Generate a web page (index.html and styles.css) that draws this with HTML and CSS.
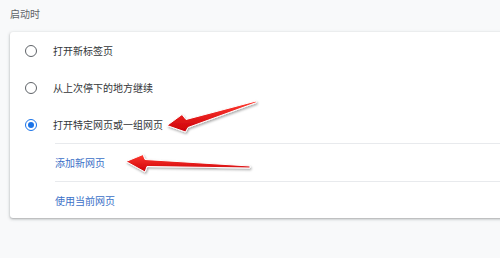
FILE: index.html
```html
<!DOCTYPE html>
<html lang="zh">
<head>
<meta charset="utf-8">
<link rel="stylesheet" href="styles.css">
</head>
<body>
<div class="page">
  <div class="title">启动时</div>
  <div class="card">
    <div class="row">
      <span class="radio"></span>
      <span class="label">打开新标签页</span>
    </div>
    <div class="row">
      <span class="radio"></span>
      <span class="label">从上次停下的地方继续</span>
    </div>
    <div class="row">
      <span class="radio checked"></span>
      <span class="label">打开特定网页或一组网页</span>
    </div>
    <div class="sub">
      <div class="link-row">添加新网页</div>
      <div class="link-row">使用当前网页</div>
    </div>
  </div>
  <svg class="arrows" width="500" height="258" viewBox="0 0 500 258">
    <defs>
      <linearGradient id="g1" x1="0" y1="0" x2="0" y2="1">
        <stop offset="0" stop-color="#ff3b30"/>
        <stop offset="1" stop-color="#cc0008"/>
      </linearGradient>
      <filter id="sh" x="-10%" y="-50%" width="120%" height="200%">
        <feDropShadow dx="1" dy="1.5" stdDeviation="1.3" flood-color="#000" flood-opacity="0.35"/>
      </filter>
    </defs>
    <polygon points="167,125.5 182,114.5 186,119.5 256,101 256.5,102.5 188,127.5 185.5,132" fill="url(#g1)" stroke="#fff" stroke-width="1" stroke-linejoin="round" filter="url(#sh)"/>
    <polygon points="126,161.5 143,154.5 145,159.5 250,166 250,168 147,166.5 145,172" fill="url(#g1)" stroke="#fff" stroke-width="1" stroke-linejoin="round" filter="url(#sh)"/>
  </svg>
</div>
</body>
</html>
```
FILE: styles.css
```css
html, body {
  margin: 0;
  padding: 0;
  background: #f8f9fa;
}
.page {
  position: relative;
  width: 500px;
  height: 258px;
  overflow: hidden;
  font-family: "Noto Sans CJK SC", "Noto Sans", sans-serif;
  font-size: 10px;
}
.title {
  height: 32px;
  padding-left: 10px;
  line-height: 27px;
  color: #5f6368;
}
.card {
  margin-left: 10px;
  margin-right: -20px;
  background: #fff;
  border-radius: 3px;
  box-shadow: 0 1px 2px rgba(60,64,67,0.3), 0 1px 3px 1px rgba(60,64,67,0.12);
}
.row {
  display: flex;
  align-items: center;
  height: 37px;
  padding-left: 15px;
}
.radio {
  box-sizing: border-box;
  width: 12px;
  height: 12px;
  border: 1.6px solid #5f6368;
  border-radius: 50%;
  margin-right: 16px;
  display: flex;
  align-items: center;
  justify-content: center;
}
.radio.checked {
  border-color: #1a73e8;
}
.radio.checked::after {
  content: "";
  width: 6px;
  height: 6px;
  border-radius: 50%;
  background: #1a73e8;
}
.label {
  color: #333639;
}
.sub {
  margin-left: 45px;
}
.link-row {
  height: 37px;
  display: flex;
  align-items: center;
  color: #3b6fc7;
  border-top: 1px solid #e8eaed;
}
.link-row + .link-row {
  height: 36px;
}
.arrows {
  position: absolute;
  left: 0;
  top: 0;
  pointer-events: none;
}
```
